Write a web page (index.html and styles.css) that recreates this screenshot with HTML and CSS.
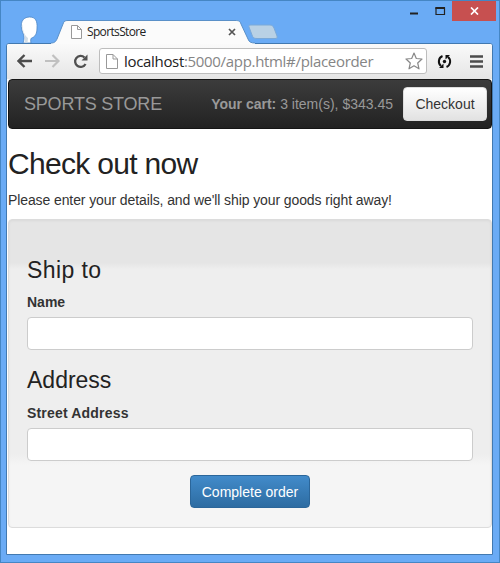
FILE: index.html
```html
<!DOCTYPE html>
<html lang="en">
<head>
<meta charset="utf-8">
<title>SportsStore</title>
<link rel="stylesheet" href="styles.css">
</head>
<body>
<div class="window">
  <header class="titlebar">
    <svg class="avatar" width="20" height="27" viewBox="0 0 20 27"><path d="M3 27C4.500 23 4.500 20 2.500 16C-.5 8 2 1 9.500 1C15.500 1 17.500 5 17 12C17 18 15 21 11.500 22C10.500 23 10.500 25 11 27Z" fill="#fff" stroke="#4c86c5" stroke-width=".8"/><path d="M2.500 8C2.500 15 5 20 8 22L7.500 26.500H4.500C5.500 22 4.500 19 3 15C2 12 1.800 10 2.500 8Z" fill="#d3dde6"/></svg>
    <div class="tab">
      <svg class="tab-shape" width="204" height="24" viewBox="0 0 204 24"><path d="M0 24V23C4 23 5 21 6 19L12 4C13 1 14 .5 17 .5H184C188 .5 189 1 190 4L197 19C198 22 200 23 204 23V24Z" fill="#fbfbfb"/><path d="M0 23C4 23 5 21 6 19L12 4C13 1 14 .5 17 .5H184C188 .5 189 1 190 4L197 19C198 22 200 23 204 23" fill="none" stroke="#5a90c8"/></svg>
      <svg class="page-icon" width="11" height="14" viewBox="0 0 11 14"><path d="M.5 .5H6.500L10.500 4.500V13.500H.5ZM6.500 .5V4.500H10.500" fill="#fff" stroke="#999"/></svg>
      <span class="tab-title">SportsStore</span>
      <svg class="tab-close" width="8" height="8" viewBox="0 0 8 8"><path d="M1 1L7 7M7 1L1 7" stroke="#555" stroke-width="1.700"/></svg>
    </div>
    <svg class="new-tab" width="30" height="16" viewBox="0 0 30 16"><path d="M3 1H22C24 1 25 2 26 4L29 12C29.500 14 29 14.500 27 14.500H9C6 14.500 5 14 4 11L1 3C.5 1.500 1 1 3 1Z" fill="#b9d1e5" stroke="#7ba9d8"/></svg>
    <div class="controls">
      <svg width="36" height="20" viewBox="0 0 36 20"><path d="M0 12.500H8" stroke="#222" stroke-width="2"/><path d="M26 7H34.500V13.500H26Z" fill="none" stroke="#222" stroke-width="1.200"/><path d="M25.400 7H35" stroke="#222" stroke-width="2"/></svg>
      <span class="close"><svg width="9" height="8" viewBox="0 0 9 8"><path d="M1 .5L8 7.500M8 .5L1 7.500" stroke="#fff" stroke-width="1.700"/></svg></span>
    </div>
  </header>
  <main class="view">
    <div class="toolbar">
      <svg class="back" width="15" height="14" viewBox="0 0 15 14"><path d="M15 7H2M7.500 1L1.500 7L7.500 13" fill="none" stroke="#4c4c4c" stroke-width="2.400"/></svg>
      <svg class="forward" width="15" height="14" viewBox="0 0 15 14"><path d="M0 7H13M7.500 1L13.500 7L7.500 13" fill="none" stroke="#c0c0c0" stroke-width="2.200"/></svg>
      <svg class="reload" width="15" height="15" viewBox="0 0 15 15"><path d="M11.500 3.500A5.500 5.500 0 1 0 12.500 10" fill="none" stroke="#505050" stroke-width="2.300"/><path d="M14.500 .5V6.500H8.500Z" fill="#505050"/></svg>
      <div class="address">
        <svg width="12" height="15" viewBox="0 0 12 15"><path d="M.5 .5H7L11.500 5V14.500H.5ZM7 .5V5H11.500" fill="#fff" stroke="#999"/></svg>
        <span class="url"><b>localhost</b>:5000/app.html#/placeorder</span>
        <svg class="star" width="18" height="18" viewBox="0 0 18 18"><path d="M9 1L11.300 6.500L17 7L12.700 11L14 16.800L9 13.800L4 16.800L5.300 11L1 7L6.700 6.500Z" fill="#fff" stroke="#888" stroke-width="1.200" stroke-linejoin="round"/></svg>
      </div>
      <svg class="sync" width="15" height="15" viewBox="0 0 15 15"><g fill="none" stroke="#111" stroke-width="2"><path d="M5.500 2A5.900 5.900 0 0 0 4 12M9.500 13A5.900 5.900 0 0 0 11 3"/></g><path d="M2 14H6.500V9.500ZM13 1H8.500V5.500Z" fill="#111"/><circle cx="7.500" cy="7.500" r="1.700" fill="#111"/></svg>
      <svg class="menu" width="13" height="13" viewBox="0 0 13 13"><path d="M0 1.500H13M0 6.500H13M0 11.500H13" stroke="#4c4c4c" stroke-width="2.500"/></svg>
    </div>
    <div class="page">
      <nav class="navbar">
        <span class="brand">SPORTS STORE</span>
        <span class="cart"><b>Your cart:</b> 3 item(s), $343.45</span>
        <button class="checkout">Checkout</button>
      </nav>
      <h2>Check out now</h2>
      <p>Please enter your details, and we'll ship your goods right away!</p>
      <form class="well">
        <h3 class="ship">Ship to</h3>
        <label for="name">Name</label>
        <input id="name" type="text">
        <h3>Address</h3>
        <label for="street" class="street">Street Address</label>
        <input id="street" type="text">
        <button type="button" class="complete">Complete order</button>
      </form>
    </div>
  </main>
</div>
</body>
</html>
```

FILE: styles.css
```css
* { box-sizing: border-box; }
body { margin: 0; font: 14px/20px "Liberation Sans", sans-serif; color: #333; }
svg { display: block; flex: none; }
.window { width: 500px; height: 563px; padding: 0 6px 7px 5px; border: 1px solid #4586c4; background: #6aabf5; }
.titlebar { display: flex; height: 42px; }
.avatar { margin: 15px 0 0 14px; }
.tab { position: relative; width: 204px; height: 24px; margin: 19px 0 0 11px; display: flex; align-items: center; padding-left: 20px; z-index: 1; }
.tab-shape { position: absolute; left: 0; top: 0; }
.page-icon, .tab-title, .tab-close { position: relative; }
.tab-title { font: 12px/16px "Open Sans", sans-serif; color: #222; margin-left: 5px; width: 141px; letter-spacing: -.65px; }
.new-tab { margin: 23px 0 0 -7px; }
.controls { display: flex; margin-left: auto; margin-right: -3px; }
.close { width: 44px; height: 20px; margin-left: 6px; background: #c75050; display: flex; align-items: center; justify-content: center; }
.view { height: 512px; border: 1px solid #4279b0; border-radius: 3px 3px 0 0; background: #fff; overflow: hidden; }
.toolbar { height: 35px; display: flex; align-items: center; padding: 0 0 1px 10px; background: linear-gradient(#fafafa, #e5e5e5); }
.forward { margin-left: 13px; }
.reload { margin-left: 13px; }
.address { display: flex; align-items: center; width: 328px; height: 26px; margin-left: 11px; padding-left: 6px; border: 1px solid #bdbdbd; border-radius: 3px; background: #fff; }
.url { font: 15px/22px "Open Sans", sans-serif; letter-spacing: -.32px; color: #858585; margin-left: 6px; width: 281px; white-space: nowrap; }
.url b { font-weight: 400; color: #222; }
.sync { margin-left: 10px; }
.menu { margin-left: 18px; }
.page { padding-left: 1px; }
.navbar { display: flex; align-items: center; height: 50px; padding: 0 4px 0 15px; border: 1px solid #151515; border-radius: 4px; background: linear-gradient(#3c3c3c, #222); color: #999; }
.brand { font-size: 18px; letter-spacing: -.2px; white-space: nowrap; }
.cart { margin-left: auto; margin-right: 10px; white-space: nowrap; }
button { font: 14px/20px "Liberation Sans", sans-serif; border-radius: 4px; padding: 0; white-space: nowrap; }
.checkout { width: 84px; height: 34px; border: 1px solid #ddd; background: linear-gradient(#fff, #e2e2e2); color: #333; }
h2 { font-size: 30px; line-height: 33px; font-weight: 400; letter-spacing: -.7px; margin: 18px 0 10px; color: #222; }
p { margin: 0 0 9px; letter-spacing: -.1px; white-space: nowrap; }
.well { height: 309px; padding: 36px 18px 0; border: 1px solid #dcdcdc; border-radius: 4px; background: linear-gradient(#e5e5e5 14%, #eee 16%, #eee 76%, #f5f5f5 80%); display: flex; flex-direction: column; box-shadow: inset 0 1px 3px rgba(0,0,0,.05); }
h3 { font-size: 23px; line-height: 28px; font-weight: 400; margin: 0; color: #222; }
.ship { letter-spacing: .4px; }
label { font-weight: 700; margin: 8px 0 5px; }
.street { margin-top: 9px; letter-spacing: .18px; }
input { width: 100%; height: 33px; border: 1px solid #ccc; border-radius: 4px; background: #fff; margin: 0 0 16px; flex: none; }
.complete { width: 120px; height: 33px; margin: -2px auto 0; border: 1px solid #2b669a; color: #fff; background: linear-gradient(#428bca, #2d6ca2); }
```
